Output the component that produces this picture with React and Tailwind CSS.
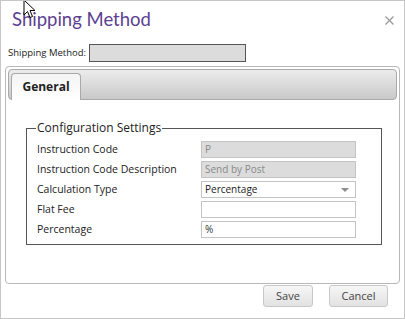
import React from 'react';

const labelFont = { fontFamily: '"Open Sans", "Noto Sans", sans-serif' };
const titleFont = { fontFamily: 'Lato, "Open Sans", sans-serif' };

const rows = [
  { label: 'Instruction Code', value: 'P', kind: 'disabled' },
  { label: 'Instruction Code Description', value: 'Send by Post', kind: 'disabled' },
  { label: 'Calculation Type', value: 'Percentage', kind: 'select' },
  { label: 'Flat Fee', value: '', kind: 'text' },
  { label: 'Percentage', value: '%', kind: 'text' },
];

const Field = ({ row }) => {
  if (row.kind === 'disabled') {
    return (
      <div className="w-[155px] h-[17px] bg-[#dcdcdc] border border-[#c4c4c4] px-[3px] text-[10px] leading-[15px] text-[#8a8a8a]">
        {row.value}
      </div>
    );
  }
  if (row.kind === 'select') {
    return (
      <div className="w-[155px] h-[17px] bg-white border border-[#c4c4c4] px-[3px] text-[10px] leading-[15px] text-[#222] flex items-center justify-between">
        <span>{row.value}</span>
        <svg width="8" height="4" viewBox="0 0 8 4" className="mr-[3px]">
          <path d="M0 0h8L4 4z" fill="#8c8c8c" />
        </svg>
      </div>
    );
  }
  return (
    <div className="w-[155px] h-[17px] bg-white border border-[#c4c4c4] px-[3px] text-[10px] leading-[15px] text-[#333]">
      {row.value}
    </div>
  );
};

const Cursor = () => (
  <svg className="absolute left-[22px] top-[-2px]" width="14" height="20" viewBox="0 0 14 20">
    <path d="M1 1v15l3.5-3.5 2.5 6 2.5-1-2.5-6H12z" fill="white" stroke="black" strokeWidth="1" strokeLinejoin="round" />
  </svg>
);

export default function App() {
  return (
    <div className="relative w-[405px] h-[319px] bg-white border border-[#c6c6c6] overflow-hidden" style={labelFont}>
      <Cursor />
      {/* Header */}
      <div className="flex items-center justify-between h-[37px] pl-[11px] pr-[10px]">
        <h1 className="text-[18.5px] leading-none text-[#5b3f91]" style={titleFont}>Shipping Method</h1>
        <svg width="9" height="9" viewBox="0 0 9 9" className="mt-[2px]">
          <path d="M0.5 0.5l8 8M8.5 0.5l-8 8" stroke="#9a9a9a" strokeWidth="1.3" />
        </svg>
      </div>

      {/* Shipping method row */}
      <div className="flex items-center pl-[7px] h-[18px] mt-[6px]">
        <span className="text-[9.5px] text-[#222] mr-[3px]">Shipping Method:</span>
        <div className="w-[157px] h-[18px] bg-[#dcdcdc] border border-[#555]"></div>
      </div>

      {/* Tab panel */}
      <div className="mx-[4px] mt-[4px] h-[218px] border border-[#b8b8b8] rounded-[4px] p-[2px]">
        <div className="h-[31px] rounded-[4px] border border-[#a9a9a9] bg-gradient-to-b from-[#ececec] to-[#c9c9c9] flex items-end pl-[2px]">
          <div className="w-[70px] h-[27px] -mb-[1px] rounded-t-[4px] border border-b-0 border-[#a9a9a9] bg-gradient-to-b from-[#f4f4f4] to-white flex items-center justify-center">
            <span className="text-[12px] font-bold text-[#222]">General</span>
          </div>
        </div>

        <fieldset className="mt-[21px] ml-[18px] w-[356px] border border-[#555] pl-[10px] pr-[25px] pb-[6px]">
          <legend className="-ml-[1px] px-[1px] text-[12px] leading-[14px] text-[#222]">Configuration Settings</legend>
          <div className="flex flex-col gap-[3px] mt-[6px]">
            {rows.map((row) => (
              <div key={row.label} className="flex items-center justify-between h-[17px]">
                <span className="text-[10.5px] text-[#222]">{row.label}</span>
                <Field row={row} />
              </div>
            ))}
          </div>
        </fieldset>
      </div>

      {/* Buttons */}
      <div className="flex justify-end gap-[16px] pr-[16px] mt-[1px]">
        <button className="w-[50px] h-[22px] rounded-[3px] border border-[#c8c8c8] bg-gradient-to-b from-[#f6f6f6] to-[#e2e2e2] text-[11px] text-[#444]">Save</button>
        <button className="w-[59px] h-[22px] rounded-[3px] border border-[#c8c8c8] bg-gradient-to-b from-[#f6f6f6] to-[#e2e2e2] text-[11px] text-[#444]">Cancel</button>
      </div>
    </div>
  );
}
